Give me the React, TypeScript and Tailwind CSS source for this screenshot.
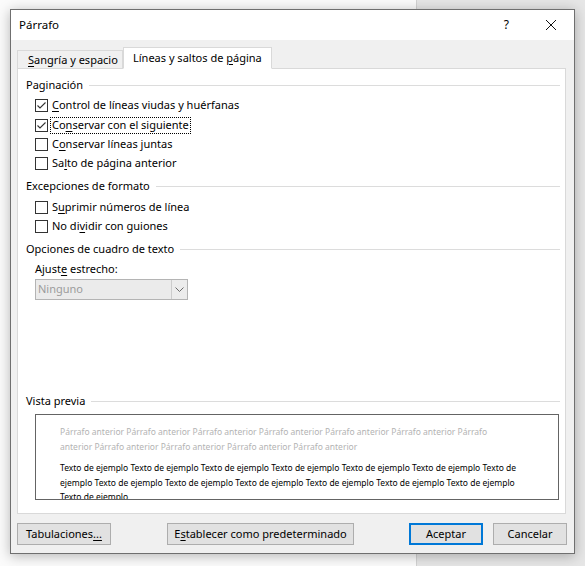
import type { ReactNode } from 'react'

// Word "Párrafo" dialog, tab "Líneas y saltos de página"

function Key({ children }: { children: ReactNode }) {
  return <u className="underline decoration-1 underline-offset-[2px]">{children}</u>
}

function GroupTitle({ children, className = '' }: { children: ReactNode; className?: string }) {
  return (
    <div className={`flex h-[20px] items-center gap-[6px] pl-[8px] pr-[5px] ${className}`}>
      <span className="whitespace-nowrap">{children}</span>
      <div className="h-px flex-1 bg-[#dcdcdc]" />
    </div>
  )
}

function CheckRow({
  checked = false,
  focused = false,
  children,
  className = 'h-[20px]',
}: {
  checked?: boolean
  focused?: boolean
  children: ReactNode
  className?: string
}) {
  return (
    <div className={`flex items-center gap-[2px] pl-[17px] ${className}`}>
      <span className="flex h-[13px] w-[13px] items-center justify-center border border-[#333333] bg-white">
        {checked && (
          <svg width="11" height="11" viewBox="0 0 11 11">
            <path d="M1.5 5.5 L4 8 L9.5 2.5" fill="none" stroke="#333333" strokeWidth="1.1" />
          </svg>
        )}
      </span>
      <span
        className={`flex h-[17px] items-center whitespace-nowrap border px-[1px] ${
          focused ? 'border-dotted border-black' : 'border-transparent'
        }`}
      >
        <span>{children}</span>
      </span>
    </div>
  )
}

function Button({
  children,
  width,
  primary = false,
}: {
  children: ReactNode
  width: string
  primary?: boolean
}) {
  return (
    <button
      className={`flex h-[22px] ${width} items-center justify-center bg-[#e1e1e1] ${
        primary ? 'border-2 border-[#0078d7]' : 'border border-[#adadad]'
      }`}
    >
      <span>{children}</span>
    </button>
  )
}

const previous = [
  'Párrafo anterior Párrafo anterior Párrafo anterior Párrafo anterior Párrafo anterior Párrafo anterior Párrafo',
  'anterior Párrafo anterior Párrafo anterior Párrafo anterior Párrafo anterior',
]

const sample = [
  'Texto de ejemplo Texto de ejemplo Texto de ejemplo Texto de ejemplo Texto de ejemplo Texto de ejemplo Texto de',
  'ejemplo Texto de ejemplo Texto de ejemplo Texto de ejemplo Texto de ejemplo Texto de ejemplo Texto de ejemplo',
  'Texto de ejemplo',
]

export default function App() {
  return (
    <div className="h-[566px] w-[585px] overflow-hidden bg-[linear-gradient(to_right,#fbfbfb_0,#fbfbfb_416px,#d2d2d2_416px,#d2d2d2_417px,#e6e6e6_417px)] pl-[10px] pt-[9px] font-['Noto_Sans',sans-serif] text-[11px] text-black">
      <div className="flex h-[545px] w-[565px] flex-col border border-[#6f6f6f] bg-[#f0f0f0] shadow-[0_2px_12px_rgba(0,0,0,0.28)]">
        {/* title bar */}
        <div className="flex h-[30px] items-center bg-white pl-[8px]">
          <span className="flex-1 text-[11.5px]">Párrafo</span>
          <span className="mr-[36px] text-[12px]">?</span>
          <svg width="12" height="12" viewBox="0 0 12 12" className="mr-[17px]">
            <path d="M1 1 L11 11 M11 1 L1 11" stroke="#111" strokeWidth="1" />
          </svg>
        </div>

        <div className="flex flex-1 flex-col pl-[6px] pt-[7px]">
          {/* tabs */}
          <div className="relative z-10 -mb-px flex items-end">
            <div className="flex h-[19px] w-[106px] items-center border border-b-0 border-[#d9d9d9] pl-[10px]">
              <span>
                <Key>S</Key>angría y espacio
              </span>
            </div>
            <div className="flex h-[22px] w-[149px] items-center border border-b-white border-[#d9d9d9] bg-white pl-[9px]">
              <span>
                Líneas y saltos de <Key>p</Key>ágina
              </span>
            </div>
          </div>

          {/* tab page */}
          <div className="flex h-[446px] w-[549px] flex-col border border-[#d9d9d9] bg-white pt-[6px]">
            <GroupTitle>Paginación</GroupTitle>
            <CheckRow checked>
              <Key>C</Key>ontrol de líneas viudas y huérfanas
            </CheckRow>
            <CheckRow checked focused>
              Co<Key>n</Key>servar con el siguiente
            </CheckRow>
            <CheckRow className="h-[19px]">
              C<Key>o</Key>nservar líneas juntas
            </CheckRow>
            <CheckRow className="h-[19px]">
              Sa<Key>l</Key>to de página anterior
            </CheckRow>

            <GroupTitle className="mt-[3px]">Excepciones de formato</GroupTitle>
            <CheckRow className="mt-px h-[20px]">
              S<Key>u</Key>primir números de línea
            </CheckRow>
            <CheckRow className="h-[19px]">
              No di<Key>v</Key>idir con guiones
            </CheckRow>

            <GroupTitle className="mt-[3px]">Opciones de cuadro de texto</GroupTitle>
            <div className="flex h-[20px] items-center pl-[17px]">
              <span>
                Ajust<Key>e</Key> estrecho:
              </span>
            </div>
            <div className="ml-[17px] flex h-[21px] w-[153px] border border-[#b4b4b4] bg-[#ebebeb]">
              <span className="flex flex-1 items-center pl-[2px] text-[#9c9c9c]">Ninguno</span>
              <span className="flex w-[16px] items-center justify-center border-l border-[#cccccc] bg-[#ececec]">
                <svg width="9" height="5" viewBox="0 0 9 5">
                  <path d="M0.5 0.5 L4.5 4.5 L8.5 0.5" fill="none" stroke="#6a6a6a" strokeWidth="1" />
                </svg>
              </span>
            </div>

            <GroupTitle className="mt-[91px]">Vista previa</GroupTitle>
            <div className="ml-[17px] mt-[3px] h-[86px] w-[524px] overflow-hidden border border-[#646464] bg-white pl-[24px] pt-[10px] text-[8.5px] leading-[14.5px]">
              {previous.map((line) => (
                <div key={line} className="whitespace-nowrap text-[#b3b3b3]">
                  {line}
                </div>
              ))}
              <div className="mt-[7px]">
                {sample.map((line, i) => (
                  <div key={i} className="whitespace-nowrap text-black">
                    {line}
                  </div>
                ))}
              </div>
            </div>
          </div>

          {/* footer buttons */}
          <div className="mt-[9px] flex w-[550px] items-center">
            <Button width="w-[94px]">
              Tabulaciones<Key>...</Key>
            </Button>
            <span className="w-[56px]" />
            <Button width="w-[187px]">
              E<Key>s</Key>tablecer como predeterminado
            </Button>
            <span className="flex-1" />
            <Button width="w-[74px]" primary>
              Aceptar
            </Button>
            <span className="w-[10px]" />
            <Button width="w-[74px]">Cancelar</Button>
          </div>
        </div>
      </div>
    </div>
  )
}
